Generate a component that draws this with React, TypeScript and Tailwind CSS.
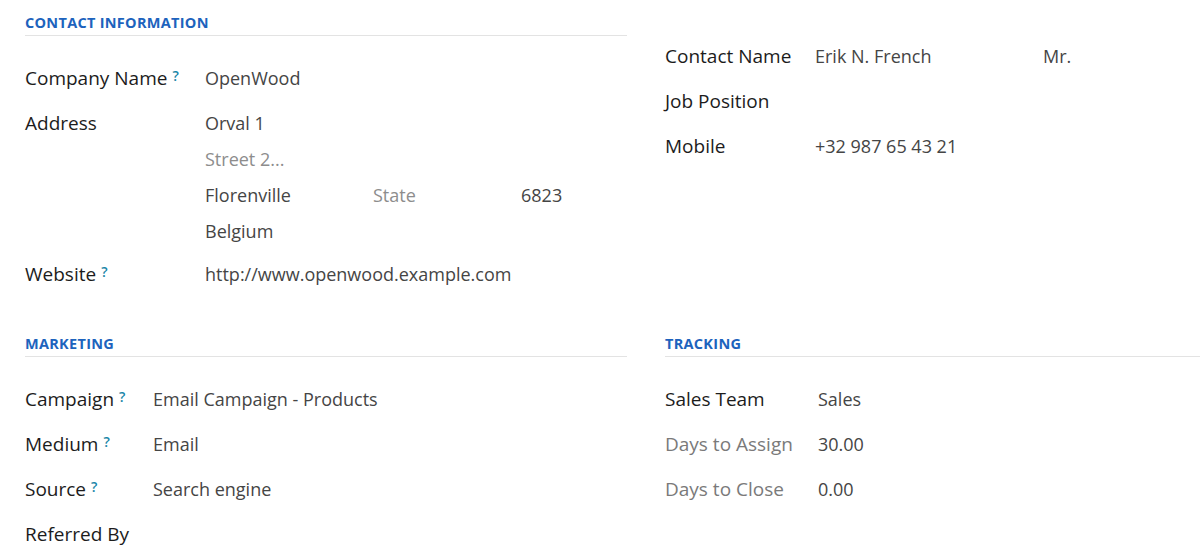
import React from 'react';

const labelCls = 'text-[19px] text-[#1c1c1c] leading-[36px] whitespace-nowrap';
const valueCls = 'text-[18px] text-[#454545] leading-[36px] whitespace-nowrap';
const placeholderCls = 'text-[18px] text-[#8d8d8d] leading-[36px] whitespace-nowrap';

function Help() {
  return <sup className="ml-[5px] text-[14px] font-semibold text-[#1a86a8] relative -top-[4px]">?</sup>;
}

function Heading({ children }: { children: React.ReactNode }) {
  return (
    <div className="pb-[2px] border-b border-[#e3e3e3]">
      <div className="text-[14.5px] leading-5 font-bold tracking-[0.02em] text-[#1d63bd] uppercase">{children}</div>
    </div>
  );
}

function Field({
  label,
  help,
  muted,
  width,
  children
}: {
  label: string;
  help?: boolean;
  muted?: boolean;
  width: string;
  children?: React.ReactNode;
}) {
  return (
    <div className="flex mb-[9px]">
      <div className={`${width} shrink-0`}>
        <span className={muted ? 'text-[19px] text-[#7a7a7a] leading-[36px] whitespace-nowrap' : labelCls}>{label}</span>
        {help && <Help />}
      </div>
      <div className="flex-1 min-w-0">{children}</div>
    </div>
  );
}

export default function App() {
  return (
    <div className="bg-white w-[1200px] h-[555px] overflow-hidden pl-[25px]" style={{ fontFamily: '"Open Sans", Roboto, sans-serif' }}>
      <div className="grid grid-cols-[602px_1fr] gap-x-[38px]">
        {/* contact information */}
        <div className="pt-[13px]">
          <Heading>Contact Information</Heading>
          <div className="mt-[24px]">
            <Field label="Company Name" help width="w-[180px]">
              <div className={valueCls}>OpenWood</div>
            </Field>
            <Field label="Address" width="w-[180px]">
              <div className={valueCls}>Orval 1</div>
              <div className={placeholderCls}>Street 2...</div>
              <div className="flex">
                <div className={`${valueCls} w-[168px]`}>Florenville</div>
                <div className={`${placeholderCls} w-[148px]`}>State</div>
                <div className={valueCls}>6823</div>
              </div>
              <div className={`${valueCls} -mb-[2px]`}>Belgium</div>
            </Field>
            <Field label="Website" help width="w-[180px]">
              <div className={valueCls}>http://www.openwood.example.com</div>
            </Field>
          </div>
        </div>

        <div className="pt-[38px]">
          <Field label="Contact Name" width="w-[150px]">
            <div className="flex">
              <div className={`${valueCls} w-[228px]`}>Erik N. French</div>
              <div className={valueCls}>Mr.</div>
            </div>
          </Field>
          <Field label="Job Position" width="w-[150px]" />
          <Field label="Mobile" width="w-[150px]">
            <div className={valueCls}>+32 987 65 43 21</div>
          </Field>
        </div>

        {/* marketing */}
        <div className="pt-[33px]">
          <Heading>Marketing</Heading>
          <div className="mt-[24px]">
            <Field label="Campaign" help width="w-[128px]">
              <div className={valueCls}>Email Campaign - Products</div>
            </Field>
            <Field label="Medium" help width="w-[128px]">
              <div className={valueCls}>Email</div>
            </Field>
            <Field label="Source" help width="w-[128px]">
              <div className={valueCls}>Search engine</div>
            </Field>
            <Field label="Referred By" width="w-[128px]" />
          </div>
        </div>

        <div className="pt-[33px]">
          <Heading>Tracking</Heading>
          <div className="mt-[24px]">
            <Field label="Sales Team" width="w-[153px]">
              <div className={valueCls}>Sales</div>
            </Field>
            <Field label="Days to Assign" muted width="w-[153px]">
              <div className={valueCls}>30.00</div>
            </Field>
            <Field label="Days to Close" muted width="w-[153px]">
              <div className={valueCls}>0.00</div>
            </Field>
          </div>
        </div>
      </div>
    </div>
  );
}
